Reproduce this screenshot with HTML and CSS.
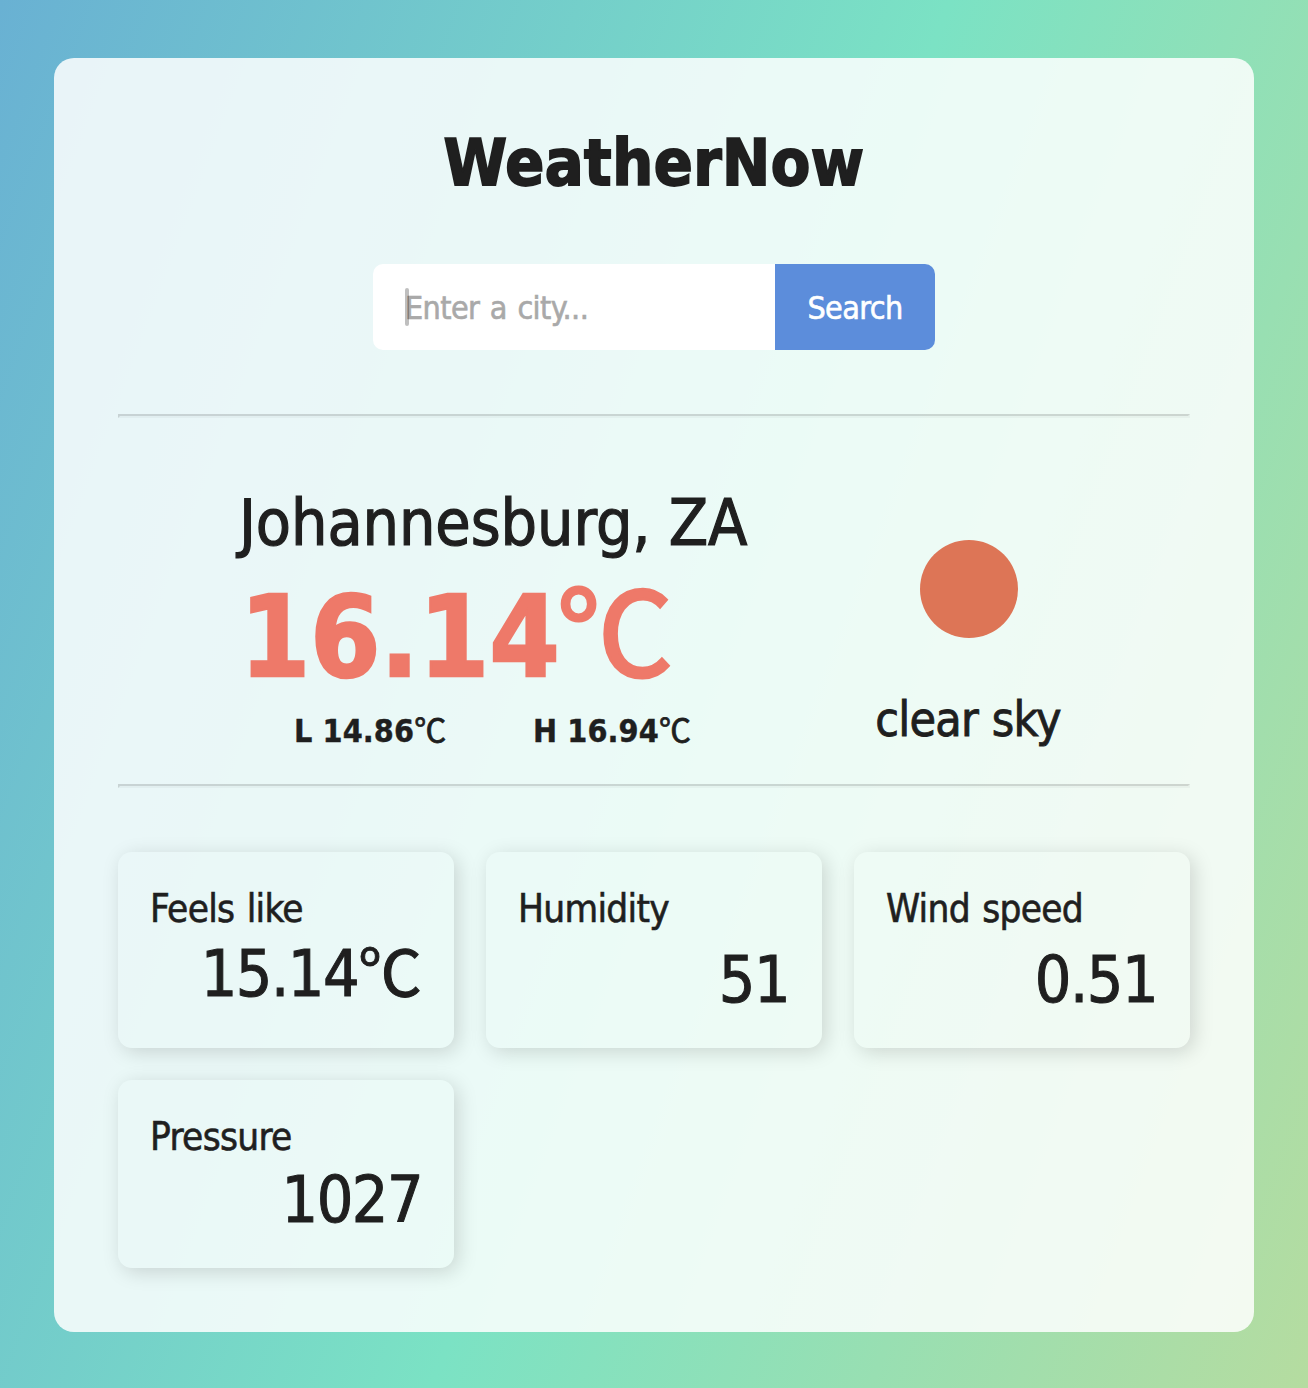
FILE: index.html
```html
<!DOCTYPE html>
<html lang="en">
<head>
<meta charset="utf-8">
<title>WeatherNow</title>
<link rel="stylesheet" href="styles.css">
</head>
<body>
<main class="panel">
  <h1 class="title">WeatherNow</h1>
  <form class="search">
    <label class="field"><span class="caret"></span><input class="input" type="text" placeholder="Enter a city..."></label>
    <button class="button" type="button">Search</button>
  </form>
  <hr class="rule">
  <section class="current">
    <div class="reading">
      <h2 class="city">Johannesburg, ZA</h2>
      <p class="temp">16.14<span class="unit unit-large">℃</span></p>
      <div class="range">
        <p class="low">L 14.86<span class="unit">℃</span></p>
        <p class="high">H 16.94<span class="unit">℃</span></p>
      </div>
    </div>
    <div class="sky">
      <svg class="sun" viewBox="0 0 98 98"><circle cx="49" cy="49" r="49"/></svg>
      <p class="description">clear sky</p>
    </div>
  </section>
  <hr class="rule">
  <section class="cards">
    <article class="card"><h3 class="label">Feels like</h3><p class="value">15.14<span class="unit">℃</span></p></article>
    <article class="card"><h3 class="label">Humidity</h3><p class="value value-plain">51</p></article>
    <article class="card"><h3 class="label">Wind speed</h3><p class="value value-plain">0.51</p></article>
    <article class="card"><h3 class="label">Pressure</h3><p class="value value-raised">1027</p></article>
  </section>
</main>
</body>
</html>
```
FILE: styles.css
```css
* { box-sizing: border-box; margin: 0; padding: 0; }
body {
  min-height: 1388px;
  padding: 58px 54px 56px;
  background: linear-gradient(110.5deg, #69b1d3, #7be2c4 52%, #b5dca0);
  color: #1f1f1f;
  font-family: Tahoma, "DejaVu Sans Condensed", "DejaVu Sans", sans-serif;
  font-stretch: condensed;
}
p, h1, h2, h3 { white-space: nowrap; }
.panel {
  height: 1274px;
  padding: 64px;
  border-radius: 20px;
  background: rgba(255, 255, 255, .85);
}
.title { font-size: 64px; line-height: 82px; padding-bottom: 2px; text-align: center; letter-spacing: .5px; -webkit-text-stroke: 1.8px; }
.search { display: flex; width: 562px; height: 86px; margin: 58px auto 64px; }
.field { position: relative; width: 402px; }
.input {
  width: 100%; height: 100%; padding: 2px 32px 0;
  border: 0; border-radius: 10px 0 0 10px; background: #fff;
  font: inherit; font-size: 32px; letter-spacing: -.6px; word-spacing: 2px;
  -webkit-text-stroke: .6px;
}
.input::placeholder { color: #a9a9a9; opacity: 1; }
.caret { position: absolute; left: 32px; top: 24px; width: 4px; height: 38px; border-radius: 2px; background: rgba(0, 0, 0, .25); }
.button {
  width: 160px; padding-top: 2px; border: 0; border-radius: 0 10px 10px 0;
  background: #5c8ddb; color: #fff; font: inherit; font-size: 32px; letter-spacing: -.6px;
  -webkit-text-stroke: .6px;
}
.rule { height: 4px; border: 2px solid; border-color: rgba(0, 0, 0, .14) rgba(0, 0, 0, .03) rgba(0, 0, 0, .03) rgba(0, 0, 0, .14); }
.current { display: flex; height: 366px; padding-top: 66px; }
.reading { width: 510px; margin-left: 121px; }
.city { font-size: 64px; font-weight: 400; line-height: 78px; padding-bottom: 2px; letter-spacing: -.1px; -webkit-text-stroke: 1.2px; }
.temp { margin: 17px 0 18px 1px; color: #ee7969; font-size: 112px; font-weight: 700; line-height: 112px; letter-spacing: .2px; -webkit-text-stroke: 2.4px; }
.range { display: flex; font-size: 32px; font-weight: 700; line-height: 40px; letter-spacing: .1px; -webkit-text-stroke: .4px; }
.low { width: 239px; margin-left: 55px; }
.low, .high { flex: none; }
.unit { font-family: "Noto Sans CJK JP", sans-serif; font-weight: 400; line-height: 0; letter-spacing: 0; -webkit-text-stroke: .8px; }
.unit-large { margin-left: -3px; font-size: 1.04em; -webkit-text-stroke: 3px; }
.sky { display: flex; flex-direction: column; align-items: center; width: 188px; margin-left: 126px; padding-top: 56px; }
.sun { display: block; width: 98px; height: 98px; fill: #dd7556; }
.description { margin: 51px 2px 0 0; font-size: 48px; line-height: 60px; letter-spacing: -.8px; word-spacing: 1px; -webkit-text-stroke: .9px; }
.cards { display: grid; grid-template-columns: repeat(3, 336px); grid-template-rows: 196px 188px; gap: 32px; margin-top: 64px; }
.card { padding: 32px; border-radius: 14px; box-shadow: 4px 4px 20px rgba(0, 0, 0, .15); }
.label { font-size: 38.4px; font-weight: 400; line-height: 50px; letter-spacing: -.7px; word-spacing: 2px; -webkit-text-stroke: .6px; }
.value { font-size: 64px; line-height: 80px; text-align: right; letter-spacing: -1.5px; -webkit-text-stroke: 1px; }
.value .unit { -webkit-text-stroke: 1px; }
.value-plain { padding: 6px 1px 0 0; }
.value-raised { margin-top: -2px; }
```
